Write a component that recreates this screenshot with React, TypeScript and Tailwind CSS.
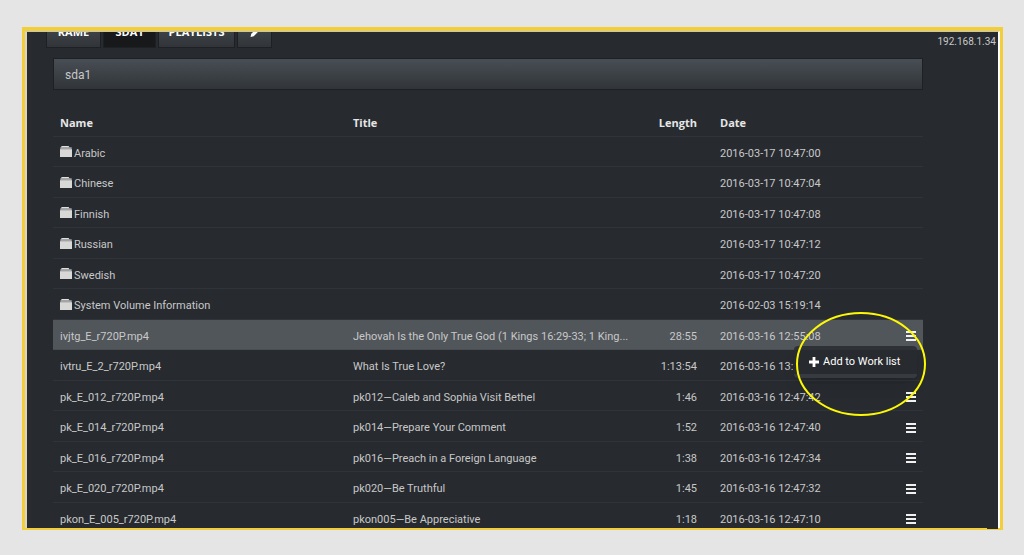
import React from 'react';

type Entry = { name: string; folder?: boolean; title?: string; length?: string; date: string };

const entries: Entry[] = [
  { name: 'Arabic', folder: true, date: '2016-03-17 10:47:00' },
  { name: 'Chinese', folder: true, date: '2016-03-17 10:47:04' },
  { name: 'Finnish', folder: true, date: '2016-03-17 10:47:08' },
  { name: 'Russian', folder: true, date: '2016-03-17 10:47:12' },
  { name: 'Swedish', folder: true, date: '2016-03-17 10:47:20' },
  { name: 'System Volume Information', folder: true, date: '2016-02-03 15:19:14' },
  { name: 'ivjtg_E_r720P.mp4', title: 'Jehovah Is the Only True God (1 Kings 16:29-33; 1 King...', length: '28:55', date: '2016-03-16 12:55:08' },
  { name: 'ivtru_E_2_r720P.mp4', title: 'What Is True Love?', length: '1:13:54', date: '2016-03-16 13:' },
  { name: 'pk_E_012_r720P.mp4', title: 'pk012—Caleb and Sophia Visit Bethel', length: '1:46', date: '2016-03-16 12:47:42' },
  { name: 'pk_E_014_r720P.mp4', title: 'pk014—Prepare Your Comment', length: '1:52', date: '2016-03-16 12:47:40' },
  { name: 'pk_E_016_r720P.mp4', title: 'pk016—Preach in a Foreign Language', length: '1:38', date: '2016-03-16 12:47:34' },
  { name: 'pk_E_020_r720P.mp4', title: 'pk020—Be Truthful', length: '1:45', date: '2016-03-16 12:47:32' },
  { name: 'pkon_E_005_r720P.mp4', title: 'pkon005—Be Appreciative', length: '1:18', date: '2016-03-16 12:47:10' },
];

const SELECTED = 'ivjtg_E_r720P.mp4';

function FolderIcon() {
  return (
    <svg className="mb-1 h-3 w-3 shrink-0" viewBox="0 0 12 12" aria-hidden="true">
      <path d="M1.5 0h7l1 1.2h2.2V3.4H.3V1.2h.6z" fill="#a2a4a6" />
      <path d="M2 0h6.500l.5 1H1.500z" fill="#e0e0e0" />
      <path d="M0 3.200h12V11H0z" fill="#d8d8d6" />
    </svg>
  );
}

function MenuIcon() {
  return (
    <svg className="block h-3 w-[10px]" viewBox="0 0 10 12" aria-hidden="true">
      <path d="M0 1h10v2H0zM0 5h10v2H0zM0 9h10v2H0z" fill="#f1f1f1" />
    </svg>
  );
}

function PencilIcon() {
  return (
    <svg className="h-3 w-3" viewBox="0 0 12 12" aria-hidden="true">
      <path d="M1.5 11l.8-3.2L8 2.1l2.4 2.4-5.7 5.7zM8.7 1.4l.8-.8 2.4 2.4-.8.8z" fill="#fff" />
    </svg>
  );
}

const tab =
  "flex h-8 items-center justify-center border border-[#1e2124] bg-linear-to-b from-[#484e55] to-[#313539] font-['Open_Sans',sans-serif] text-[11px] font-bold text-white";

const head = "border-b border-[#30343a] pt-[4px] font-['Open_Sans',sans-serif] font-bold";

function ContextMenu() {
  return (
    <div className="absolute top-4 right-[6px] z-10 w-[123px] rounded-sm border-y-4 border-t-[#2e3237] border-b-[#373b40] bg-[#272b30] shadow-lg">
      <button type="button" className="flex h-6 w-full items-center gap-1 pl-[15px] text-[11px] whitespace-nowrap text-white">
        <svg className="h-[10px] w-[10px] shrink-0" viewBox="0 0 10 10" aria-hidden="true">
          <path d="M3.6 0h2.8v3.6H10v2.8H6.4V10H3.6V6.4H0V3.6h3.6z" fill="#fff" />
        </svg>
        Add to Work list
      </button>
      <svg className="pointer-events-none absolute top-[-38px] left-[2px] h-[104px] w-[130px] max-w-none" viewBox="0 0 130 104" aria-hidden="true">
        <ellipse cx="65" cy="52" rx="64" ry="51" fill="none" stroke="#fdf905" strokeWidth="2" />
      </svg>
    </div>
  );
}

export default function App() {
  return (
    <div className="h-screen bg-[#e5e5e5] pt-[27px] pr-[21px] pb-[25px] pl-[22px] font-[Roboto,sans-serif] text-[11px] text-[#c8c8c8]">
      <div className="relative h-full border-x-3 border-t-4 border-b-2 border-[#f2cf38]">
        <div className="h-full border-t border-r-2 border-l-2 border-t-[#c5c6c4] border-r-white border-l-[#d5d5ce]">
          <div className="flex h-full items-start overflow-hidden bg-[#272b30]">
            <main className="min-w-0 flex-1">
              <nav className="-mt-4 ml-[19px] flex gap-[2px]">
                <button type="button" className={`${tab} w-[55px]`}>RAME</button>
                <button type="button" className="flex h-8 w-[53px] items-center justify-center border border-[#1e2124] bg-[#17191b] font-['Open_Sans',sans-serif] text-[11px] font-bold text-white">SDA1</button>
                <button type="button" className={`${tab} w-[77px]`}>PLAYLISTS</button>
                <button type="button" className={`${tab} w-[35px]`} aria-label="Edit"><PencilIcon /></button>
              </nav>
              <div className="ml-[26px]">
                <div className="mt-[10px] flex h-8 items-center border border-[#1e2124] bg-linear-to-b from-[#484e55] to-[#313539] px-[11px] pt-[2px] text-[12px]">
                  sda1
                </div>
                <table className="mt-4 w-full table-fixed border-separate border-spacing-0 text-left">
                  <colgroup>
                    <col className="w-[293px]" />
                    <col />
                    <col className="w-16" />
                    <col className="w-[182px]" />
                    <col className="w-[37px]" />
                  </colgroup>
                  <thead>
                    <tr className="h-[31px] text-[#e6e6e6]">
                      <th className={`${head} px-[7px]`}>Name</th>
                      <th className={`${head} px-[7px]`}>Title</th>
                      <th className={`${head} px-[7px] text-right`}>Length</th>
                      <th className={`${head} px-4`}>Date</th>
                      <th className={head} aria-label="Actions" />
                    </tr>
                  </thead>
                  <tbody>
                    {entries.map((e) => {
                      const selected = e.name === SELECTED;
                      const cell = selected ? 'border-b border-[#494e53] p-0' : 'border-b border-[#30343a] p-0';
                      return (
                        <tr key={e.name} className={selected ? 'h-[30px] bg-[#51565b]' : 'odd:h-[30px] even:h-[31px]'}>
                          <td className={`${cell} pt-[5px]`}>
                            <div className="flex items-center gap-[2px] px-[7px]">
                              {e.folder && <FolderIcon />}
                              {e.name}
                            </div>
                          </td>
                          <td className={`${cell} pt-[5px]`}><div className="px-[7px] whitespace-nowrap">{e.title}</div></td>
                          <td className={`${cell} pt-[5px]`}><div className="px-[7px] text-right">{e.length}</div></td>
                          <td className={`${cell} pt-[5px]`}><div className="px-4">{e.date}</div></td>
                          <td className={`${cell} pt-[3px]`}>
                            {!e.folder && (
                              <div className="relative flex items-center justify-end pr-[7px]">
                                <button type="button" aria-label={`Actions for ${e.name}`}><MenuIcon /></button>
                                {selected && <ContextMenu />}
                              </div>
                            )}
                          </td>
                        </tr>
                      );
                    })}
                  </tbody>
                </table>
              </div>
            </main>
            <aside className="w-[75px] shrink-0 pr-[2px] text-right text-[10px] leading-[19px]">192.168.1.34</aside>
          </div>
        </div>
        <span className="absolute right-[2px] -bottom-px h-px w-[11px] bg-[#272b30]" />
      </div>
    </div>
  );
}
